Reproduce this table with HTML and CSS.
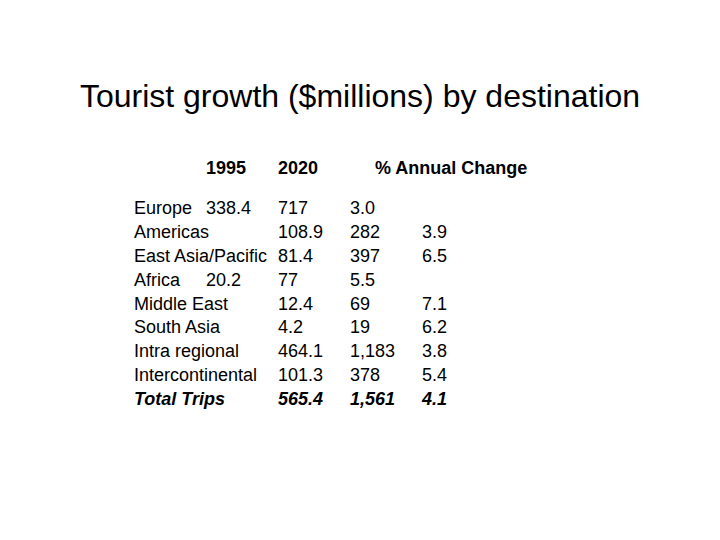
FILE: index.html
```html
<!DOCTYPE html>
<html>
<head>
<meta charset="utf-8">
<link rel="stylesheet" href="styles.css">
</head>
<body>
<div class="slide">
  <h1 class="title">Tourist growth ($millions) by destination</h1>
  <div class="table">
<pre class="head">	1995	2020	<span class="change">% Annual Change</span></pre>
<pre class="body">Europe	338.4	717	3.0
Americas	108.9	282	3.9
East Asia/Pacific	81.4	397	6.5
Africa	20.2	77	5.5
Middle East	12.4	69	7.1
South Asia	4.2	19	6.2
Intra regional	464.1	1,183	3.8
Intercontinental	101.3	378	5.4
<em class="total">Total Trips	565.4	1,561	4.1</em></pre>
  </div>
</div>
</body>
</html>
```
FILE: styles.css
```css
html, body {
  margin: 0;
  padding: 0;
  background: #ffffff;
}
.slide {
  width: 720px;
  height: 540px;
  font-family: "Liberation Sans", Arial, sans-serif;
  color: #000;
  display: flex;
  flex-direction: column;
}
.title {
  margin: 78px 0 0 0;
  font-size: 32px;
  font-weight: normal;
  line-height: 36px;
  text-align: center;
}
.table {
  padding-left: 134px;
  margin-top: 43px;
}
pre {
  margin: 0;
  font-family: "Liberation Sans", Arial, sans-serif;
  font-size: 18px;
  line-height: 23.9px;
  tab-size: 72px;
  -moz-tab-size: 72px;
}
.head {
  font-weight: bold;
}
.change {
  margin-left: 25px;
}
.body {
  margin-top: 16px;
}
.total {
  font-weight: bold;
  font-style: italic;
}
```
